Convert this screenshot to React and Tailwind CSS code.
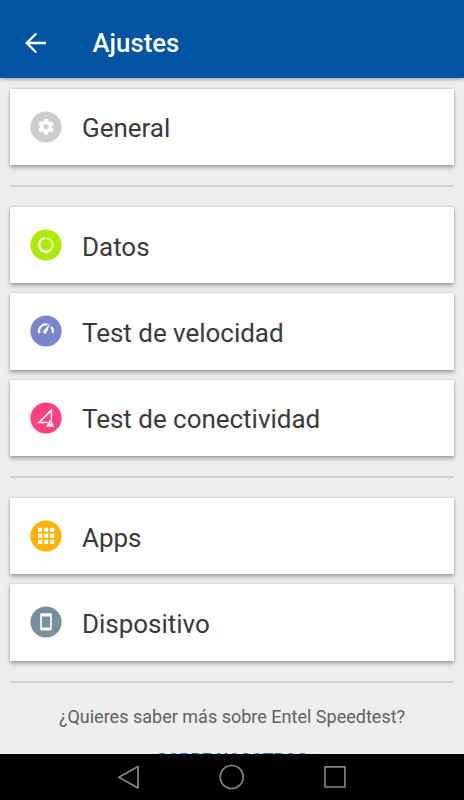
import React from 'react';

// 32x32 round badges, one per settings entry

function Badge({ color, children }) {
  return (
    <svg viewBox="0 0 32 32" className="h-8 w-8 shrink-0">
      <circle cx="16" cy="16" r="15.6" fill={color} />
      {children}
    </svg>
  );
}

function GeneralIcon() {
  return (
    <Badge color="#cccccc">
      <path
        transform="translate(6.1 5.9) scale(0.825)"
        fill="#fff"
        d="M19.14 12.94c.04-.3.06-.61.06-.94 0-.32-.02-.64-.07-.94l2.03-1.58a.49.49 0 0 0 .12-.61l-1.92-3.32a.488.488 0 0 0-.59-.22l-2.39.96c-.5-.38-1.03-.7-1.62-.94l-.36-2.54a.484.484 0 0 0-.48-.41h-3.84c-.24 0-.43.17-.47.41l-.36 2.54c-.59.24-1.13.57-1.62.94l-2.39-.96c-.22-.08-.47 0-.59.22L2.74 8.87c-.12.21-.08.47.12.61l2.03 1.58c-.05.3-.09.63-.09.94s.02.64.07.94l-2.03 1.58a.49.49 0 0 0-.12.61l1.92 3.32c.12.22.37.29.59.22l2.39-.96c.5.38 1.03.7 1.62.94l.36 2.54c.05.24.24.41.48.41h3.84c.24 0 .44-.17.47-.41l.36-2.54c.59-.24 1.13-.56 1.62-.94l2.39.96c.22.08.47 0 .59-.22l1.92-3.32c.12-.22.07-.47-.12-.61l-2.01-1.58zM12 15.1A3.1 3.1 0 1 1 12 8.9a3.1 3.1 0 0 1 0 6.2z"
      />
    </Badge>
  );
}

function DataIcon() {
  return (
    <Badge color="#aeea00">
      <g fill="none" strokeWidth="2.3">
        <path d="M16.6 9.2A6.8 6.8 0 0 1 21.9 19.2" stroke="#fff" strokeOpacity="0.55" />
        <path d="M21.5 19.9A6.8 6.8 0 1 1 15.2 9.2" stroke="#fff" />
      </g>
    </Badge>
  );
}

function SpeedIcon() {
  return (
    <Badge color="#7986cb">
      <path d="M9.2 18.2A6.9 6.9 0 0 1 17.5 9.6" fill="none" stroke="#fff" strokeWidth="2.1" />
      <path d="M21.2 11.7A6.9 6.9 0 0 1 22.7 18.2" fill="none" stroke="#fff" strokeWidth="2.1" />
      <path d="M20.4 7.9L16.5 17.4A1.7 1.7 0 1 1 13.6 15.7Z" fill="#fff" />
    </Badge>
  );
}

function ConnectivityIcon() {
  return (
    <Badge color="#ff4081">
      <path d="M21.4 8.1V20.6H8.9Z" fill="none" stroke="#fff" strokeWidth="1.5" />
      <path d="M20.2 15.6L25.4 25.4H15Z" fill="#ff4081" />
      <path d="M20.2 17.1L24.3 24.8H16.1Z" fill="#fff" />
      <path d="M20.2 19.8V22M20.2 22.8V23.7" stroke="#ff4081" strokeWidth="0.9" />
    </Badge>
  );
}

function AppsIcon() {
  const steps = [8, 14, 20];
  return (
    <Badge color="#ffb300">
      {steps.map((y) => steps.map((x) => (
        <rect key={`${x}-${y}`} x={x} y={y - 0.3} width="4.2" height="4.2" fill="#fff" />
      )))}
    </Badge>
  );
}

function DeviceIcon() {
  return (
    <Badge color="#78909c">
      <path
        fill="#fff"
        fillRule="evenodd"
        d="M11.5 7.3h9a1.3 1.3 0 0 1 1.3 1.3v14.6a1.3 1.3 0 0 1-1.3 1.3h-9a1.3 1.3 0 0 1-1.3-1.3V8.6a1.3 1.3 0 0 1 1.3-1.3zM11.9 10.4v11h8.2v-11z"
      />
    </Badge>
  );
}

const GROUPS = [
  [{ label: 'General', icon: GeneralIcon }],
  [
    { label: 'Datos', icon: DataIcon },
    { label: 'Test de velocidad', icon: SpeedIcon },
    { label: 'Test de conectividad', icon: ConnectivityIcon },
  ],
  [
    { label: 'Apps', icon: AppsIcon },
    { label: 'Dispositivo', icon: DeviceIcon },
  ],
];

function SettingCard({ label, icon: Glyph }) {
  return (
    <button className="flex h-[76.4px] w-full items-center bg-white pl-5 text-left shadow-[0_3px_4px_rgba(0,0,0,0.28),0_0_2px_rgba(0,0,0,0.24)]">
      <Glyph />
      <span className="ml-5 pt-[3px] text-[26px] leading-8 tracking-[-0.03px] text-[#3a3a3a]">{label}</span>
    </button>
  );
}

function NavBar() {
  return (
    <nav className="flex h-[46px] shrink-0 items-center justify-center bg-black">
      <svg viewBox="0 0 464 46" className="h-[46px] w-[464px]" fill="none" stroke="#858585" strokeWidth="1.7" strokeLinejoin="round">
        <path d="M138 12.5V34L118.8 23.2Z" />
        <circle cx="231.7" cy="23" r="11.5" />
        <rect x="325" y="12.8" width="20" height="20.2" />
      </svg>
    </nav>
  );
}

export default function App() {
  return (
    <div className="flex h-[800px] w-[464px] flex-col overflow-hidden bg-[#eeeeee] font-['Roboto',sans-serif]">
      <header className="z-10 flex h-[78px] shrink-0 items-center bg-[#0054a0] pt-[7px] pl-[25px] shadow-[0_1px_4px_rgba(0,0,0,0.4)]">
        <svg viewBox="0 0 22 22" className="h-[22px] w-[22px]" fill="none" stroke="#fff" strokeWidth="2.4">
          <path d="M21 11H2.5M11.3 1.5L1.8 11L11.3 20.5" />
        </svg>
        <h1 className="ml-[45.5px] pt-px text-[25.8px] leading-8 font-medium text-white">Ajustes</h1>
      </header>

      <main className="min-h-0 flex-1 overflow-hidden px-2.5 pt-[10.7px]">
        {GROUPS.map((group) => (
          <section key={group[0].label}>
            <div className="flex flex-col gap-[10px]">
              {group.map((item) => <SettingCard key={item.label} {...item} />)}
            </div>
            <hr className="mt-[20px] mb-[19.8px] h-[2px] border-0 bg-[#cfcfcf]" />
          </section>
        ))}
        <p className="pt-[2.6px] text-center text-[18px] leading-6 tracking-[0.01px] text-[#616161]">¿Quieres saber más sobre Entel Speedtest?</p>
        <div className="mt-[19px] text-center text-[17.5px] leading-6 font-bold text-[#0277bd]">SOBRE NOSOTROS</div>
      </main>

      <NavBar />
    </div>
  );
}
